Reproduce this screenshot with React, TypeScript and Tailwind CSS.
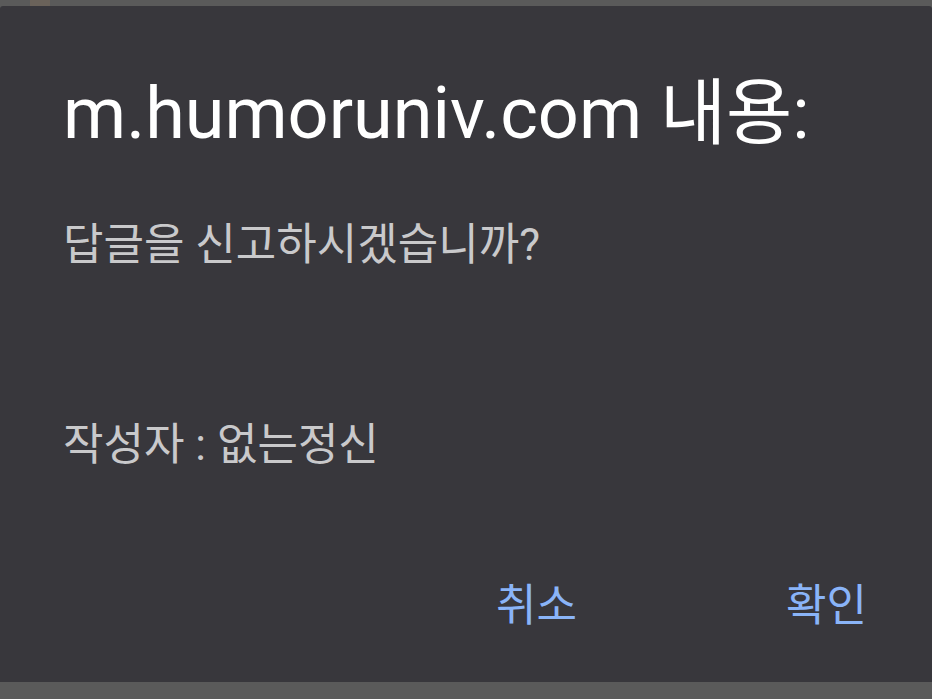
export default function App() {
  const font = { fontFamily: 'Roboto, "Noto Sans CJK KR", sans-serif' }
  return (
    <div className="w-[932px] h-[699px] bg-[#5a5a5a] pt-[6px] overflow-hidden relative" style={font}>
      <div className="absolute left-[30px] top-0 w-[20px] h-[6px] bg-[#6a625a]" />
      <div className="h-[676px] bg-[#38373c] rounded-t-[3px] flex flex-col pl-[63px] pr-[65px]">
        <h1 className="mt-[72px] text-[72px] leading-[72px] text-white whitespace-nowrap">m.humoruniv.com 내용:</h1>
        <p className="mt-[67px] text-[44px] leading-[56px] text-[#c9c9cb]">답글을 신고하시겠습니까?</p>
        <p className="mt-[144px] text-[44px] leading-[56px] text-[#c9c9cb]">작성자 : 없는정신</p>
        <div className="mt-[105px] flex justify-end gap-[209px] text-[44px] leading-[56px] text-[#8ab4f8]">
          <span>취소</span>
          <span>확인</span>
        </div>
      </div>
    </div>
  )
}
